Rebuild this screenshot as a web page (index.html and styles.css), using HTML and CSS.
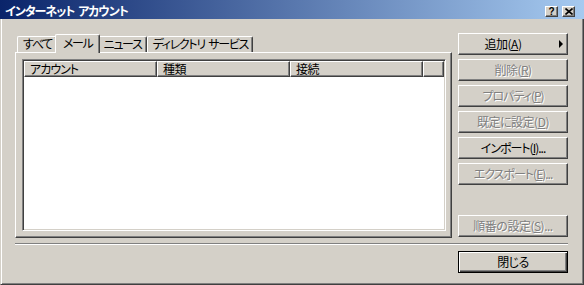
FILE: index.html
```html
<!DOCTYPE html>
<html lang="ja">
<head>
<meta charset="utf-8">
<title>インターネット アカウント</title>
<link rel="stylesheet" href="styles.css">
</head>
<body>
<div class="window">
  <div class="titlebar">
    <span class="title">インターネット アカウント</span>
    <div class="caption-buttons">
      <span class="cap-btn help">?</span>
      <span class="cap-btn close"><svg width="8" height="7" viewBox="0 0 8 7"><path d="M0.5 0.5 L7.5 6.5 M7.5 0.5 L0.5 6.5" stroke="#000" stroke-width="1.6" fill="none"/></svg></span>
    </div>
  </div>
  <div class="frame">
    <div class="main">
      <div class="tabctl">
        <div class="tabstrip">
          <div class="tab">すべて</div>
          <div class="tab active">メール</div>
          <div class="tab">ニュース</div>
          <div class="tab">ディレクトリ サービス</div>
        </div>
        <div class="panel">
          <div class="listbox">
            <div class="header">
              <div class="col kana">アカウント</div>
              <div class="col">種類</div>
              <div class="col">接続</div>
              <div class="col filler"></div>
            </div>
          </div>
        </div>
      </div>
      <div class="side">
        <div class="btn menu"><span class="label">追加(<u>A</u>)</span><span class="arrow"></span></div>
        <div class="btn disabled">削除(<u>R</u>)</div>
        <div class="btn disabled kana">プロパティ(<u>P</u>)</div>
        <div class="btn disabled">既定に設定(<u>D</u>)</div>
        <div class="btn kana">インポート(<u>I</u>)...</div>
        <div class="btn disabled kana">エクスポート(<u>E</u>)...</div>
        <div class="spacer"></div>
        <div class="btn disabled">順番の設定(<u>S</u>)...</div>
      </div>
    </div>
    <div class="sep"></div>
    <div class="bottom">
      <div class="btn default">閉じる</div>
    </div>
  </div>
</div>
</body>
</html>
```

FILE: styles.css
```css
* { box-sizing: border-box; }
html, body { margin: 0; padding: 0; }
body {
  width: 584px;
  height: 285px;
  background: #d4d0c8;
  font-family: "Noto Sans CJK JP", "Liberation Sans", sans-serif;
  font-size: 12px;
  font-feature-settings: "palt" 1;
  letter-spacing: -0.5px;
  color: #000;
  overflow: hidden;
}
.kana { letter-spacing: -1px; }
.window {
  width: 584px;
  height: 285px;
  display: flex;
  flex-direction: column;
}
.titlebar {
  height: 19px;
  flex: none;
  display: flex;
  align-items: flex-start;
  background: linear-gradient(to right, #0a246a, #a6caf0);
  padding-right: 9px;
}
.title {
  color: #fff;
  font-weight: bold;
  line-height: 16px;
  padding: 3px 0 0 5px;
  letter-spacing: -1px;
  word-spacing: 2px;
  white-space: nowrap;
}
.caption-buttons {
  margin-left: auto;
  margin-top: 6px;
  display: flex;
  gap: 4px;
}
.cap-btn {
  width: 13px;
  height: 11px;
  background: #d4d0c8;
  border-top: 1px solid #fff;
  border-left: 1px solid #fff;
  border-right: 1px solid #404040;
  border-bottom: 1px solid #404040;
  box-shadow: inset -1px -1px 0 #808080;
  display: flex;
  align-items: center;
  justify-content: center;
}
.help {
  font-family: "Liberation Sans", sans-serif;
  font-weight: bold;
  font-size: 10px;
  line-height: 9px;
  letter-spacing: 0;
}
.frame {
  flex: 1;
  display: flex;
  flex-direction: column;
  border-left: 1px solid #d4d0c8;
  border-right: 1px solid #404040;
  border-bottom: 1px solid #404040;
  box-shadow: inset 1px 0 0 #fff, inset -1px -1px 0 #808080;
  padding: 14px 15px 11px 14px;
}
.main {
  display: flex;
  gap: 6px;
  height: 205px;
}
.tabctl {
  width: 437px;
  display: flex;
  flex-direction: column;
}
.tabstrip {
  height: 19px;
  display: flex;
  align-items: flex-start;
  padding-left: 2px;
  position: relative;
  z-index: 1;
}
.tab {
  margin-top: 3px;
  height: 16px;
  line-height: 14px;
  padding: 0 4px 0 5px;
  letter-spacing: -1.3px;
  word-spacing: 2px;
  background: #d4d0c8;
  border-top: 1px solid #fff;
  border-left: 1px solid #fff;
  border-right: 1px solid #404040;
  box-shadow: inset -1px 0 0 #808080;
  border-radius: 2px 2px 0 0;
  white-space: nowrap;
}
.tab.active {
  margin: 1px -2px 0;
  height: 19px;
  padding: 0 6px 0 7px;
  line-height: 16px;
  position: relative;
  z-index: 2;
}
.panel {
  height: 186px;
  border-top: 1px solid #fff;
  border-left: 1px solid #fff;
  border-right: 1px solid #404040;
  border-bottom: 1px solid #404040;
  box-shadow: inset -1px -1px 0 #808080;
  padding: 6px 5px 6px 6px;
}
.listbox {
  height: 172px;
  background: #fff;
  border-top: 1px solid #808080;
  border-left: 1px solid #808080;
  border-right: 1px solid #fff;
  border-bottom: 1px solid #fff;
  box-shadow: inset 1px 1px 0 #404040, inset -1px -1px 0 #d4d0c8;
  padding: 1px;
}
.header {
  display: flex;
  height: 16px;
}
.col {
  width: 133px;
  flex: none;
  background: #d4d0c8;
  border-top: 1px solid #fff;
  border-left: 1px solid #fff;
  border-right: 1px solid #404040;
  border-bottom: 1px solid #404040;
  box-shadow: inset -1px -1px 0 #808080;
  padding-left: 5px;
  line-height: 13px;
  white-space: nowrap;
}
.col.filler { flex: 1; width: auto; }
.side {
  width: 110px;
  display: flex;
  flex-direction: column;
  gap: 4px;
}
.spacer { height: 22px; }
.btn {
  height: 22px;
  width: 110px;
  background: #d4d0c8;
  border-top: 1px solid #fff;
  border-left: 1px solid #fff;
  border-right: 1px solid #404040;
  border-bottom: 1px solid #404040;
  box-shadow: inset -1px -1px 0 #808080;
  display: flex;
  align-items: center;
  justify-content: center;
  white-space: nowrap;
  line-height: 16px;
}
.btn u { text-underline-offset: 1px; }
.btn.disabled {
  color: #808080;
  text-shadow: 1px 1px 0 #fff;
}
.btn.menu {
  padding: 0 4px 0 1px;
}
.btn.menu .label {
  flex: 1;
  text-align: center;
}
.arrow {
  width: 0;
  height: 0;
  border-left: 4px solid #000;
  border-top: 4px solid transparent;
  border-bottom: 4px solid transparent;
  margin-left: 13px;
}
.sep {
  margin-top: 5px;
  height: 2px;
  border-top: 1px solid #808080;
  border-bottom: 1px solid #fff;
}
.bottom {
  margin-top: 6px;
  display: flex;
  justify-content: flex-end;
}
.btn.default {
  border: 1px solid #000;
  box-shadow: inset 1px 1px 0 #fff, inset -1px -1px 0 #404040, inset -2px -2px 0 #808080;
}
```
